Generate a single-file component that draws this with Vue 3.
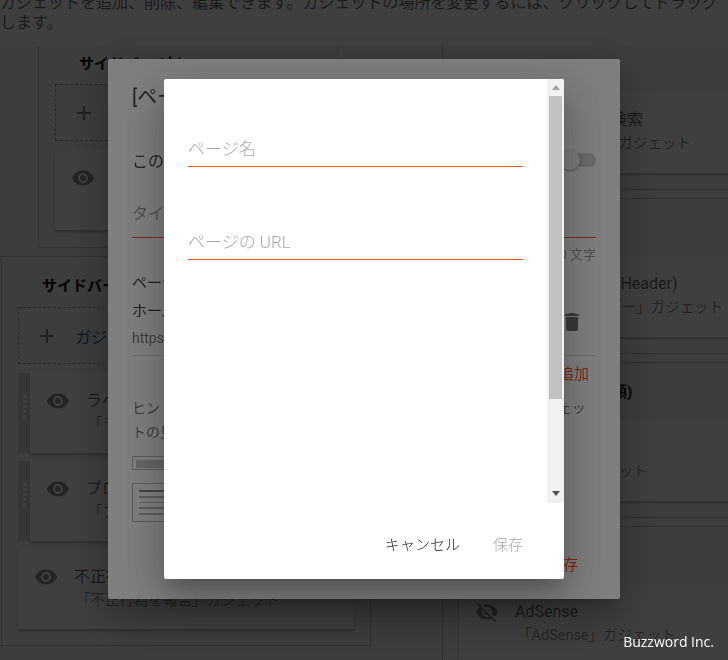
<template>
  <div class="page">
    <p class="notice">ガジェットを追加、削除、編集できます。ガジェットの場所を変更するには、クリックしてドラッグします。</p>

    <div class="columns">
      <div class="col col-left">
        <section v-for="sec in leftSections" :key="sec.title" class="area" :class="sec.cls">
          <h3 class="area-title">{{ sec.title }}</h3>
          <div class="add-box">
            <svg class="plus" viewBox="0 0 24 24"><path :d="plusPath" /></svg>
            <a class="add-link">ガジェットを追加</a>
          </div>
          <div v-for="g in sec.gadgets" :key="g.name" class="gadget-row">
            <div v-if="g.drag" class="handle"><i v-for="n in 5" :key="n"></i></div>
            <div class="gadget">
              <svg class="eye" viewBox="0 0 24 24"><path :d="g.off ? eyeOffPath : eyePath" /></svg>
              <div class="gadget-text">
                <div class="gadget-name">{{ g.name }}</div>
                <div class="gadget-type">{{ g.type }}</div>
              </div>
            </div>
          </div>
        </section>
      </div>

      <div class="col col-right">
        <section v-for="sec in rightSections" :key="sec.title" class="area" :class="sec.cls">
          <h3 class="area-title">{{ sec.title }}</h3>
          <div v-for="g in sec.gadgets" :key="g.name" class="gadget-row">
            <div class="gadget">
              <svg class="eye" viewBox="0 0 24 24"><path :d="g.off ? eyeOffPath : eyePath" /></svg>
              <div class="gadget-text">
                <div class="gadget-name">{{ g.name }}</div>
                <div class="gadget-type">{{ g.type }}</div>
              </div>
            </div>
          </div>
        </section>
      </div>
    </div>
  </div>

  <!-- gadget settings dialog -->
  <div class="scrim">
    <div class="dialog settings">
      <h2 class="settings-title">[ページ リスト] の設定</h2>
      <div class="toggle-row">
        <span>このガジェットを表示</span>
        <span class="toggle"><span class="knob"></span></span>
      </div>
      <div class="title-field">タイトル</div>
      <div class="counter">0 文字</div>
      <div class="page-row">
        <div>
          <div class="page-label">ページ</div>
          <div class="page-label">ホーム</div>
          <div class="page-url">https://www.buzzword.example/</div>
        </div>
        <svg class="trash" viewBox="0 0 24 24"><path :d="trashPath" /></svg>
      </div>
      <div class="add-page"><a>外部リンクを追加</a></div>
      <p class="hint">ヒント: ページを追加すると、ブログ上部にタブでページリストガジェッ<br>トの見出しが表示されます。</p>
      <div class="thumb-bar"><span></span></div>
      <div class="thumb-doc"><i v-for="n in 5" :key="n"></i></div>
      <div class="settings-foot"><a>保存</a></div>
    </div>
  </div>

  <!-- add page dialog -->
  <div class="scrim">
    <div class="dialog add-page-dialog">
      <div class="scroll-wrap">
        <div class="form">
          <div class="field"><input class="text-input" type="text" placeholder="ページ名" /></div>
          <div class="field second"><input class="text-input" type="text" placeholder="ページの URL" /></div>
        </div>
        <div class="scrollbar">
          <span class="arrow up"></span>
          <span class="thumb"></span>
          <span class="arrow down"></span>
        </div>
      </div>
      <div class="actions">
        <button class="btn">キャンセル</button>
        <button class="btn disabled">保存</button>
      </div>
    </div>
  </div>

  <div class="watermark">Buzzword Inc.</div>
</template>

<script setup>
const plusPath = 'M19 13h-6v6h-2v-6H5v-2h6V5h2v6h6v2z'
const eyePath = 'M12 4.5C7 4.5 2.73 7.61 1 12c1.73 4.39 6 7.5 11 7.5s9.27-3.11 11-7.5c-1.73-4.39-6-7.5-11-7.5zM12 17c-2.76 0-5-2.24-5-5s2.24-5 5-5 5 2.24 5 5-2.24 5-5 5zm0-8c-1.66 0-3 1.34-3 3s1.34 3 3 3 3-1.34 3-3-1.34-3-3-3z'
const eyeOffPath = 'M12 7c2.76 0 5 2.24 5 5 0 .65-.13 1.26-.36 1.83l2.92 2.92c1.51-1.26 2.7-2.89 3.43-4.75-1.73-4.39-6-7.5-11-7.5-1.4 0-2.74.25-3.98.7l2.16 2.16C10.74 7.13 11.35 7 12 7zM2 4.27l2.28 2.28.46.46C3.08 8.3 1.78 10.02 1 12c1.73 4.39 6 7.5 11 7.5 1.55 0 3.03-.3 4.38-.84l.42.42L19.73 22 21 20.73 3.27 3 2 4.27zM7.53 9.8l1.55 1.55c-.05.21-.08.43-.08.65 0 1.66 1.34 3 3 3 .22 0 .44-.03.65-.08l1.55 1.55c-.67.33-1.41.53-2.2.53-2.76 0-5-2.24-5-5 0-.79.2-1.53.53-2.2zm4.31-.78l3.15 3.15.02-.16c0-1.66-1.34-3-3-3l-.17.01z'
const trashPath = 'M6 19c0 1.1.9 2 2 2h8c1.1 0 2-.9 2-2V7H6v12zM19 4h-3.5l-1-1h-5l-1 1H5v2h14V4z'

const leftSections = [
  {
    title: 'サイドバー (上)',
    cls: 'inner-area',
    gadgets: [{ name: '検索', type: '「検索」ガジェット' }]
  },
  {
    title: 'サイドバー',
    cls: 'wide-area',
    gadgets: [
      { name: 'ラベル', type: '「ラベル」ガジェット', drag: true },
      { name: 'ブログ アーカイブ', type: '「ブログ アーカイブ」ガジェット', drag: true },
      { name: '不正行為を報告', type: '「不正行為を報告」ガジェット' }
    ]
  }
]

const rightSections = [
  {
    title: 'ページ上部',
    cls: 'cut-area',
    gadgets: [{ name: 'このブログを検索', type: '「ブログ検索」ガジェット' }]
  },
  {
    title: 'ページ ヘッダー',
    gadgets: [{ name: '上部ヘッダー (Header)', type: '「ページ ヘッダー」ガジェット' }]
  },
  {
    title: 'ブログの投稿欄 (先頭)',
    gadgets: [{ name: '広告', type: '「広告」ガジェット' }]
  },
  {
    title: 'ブログの投稿',
    gadgets: [{ name: 'AdSense', type: '「AdSense」ガジェット', off: true }]
  }
]
</script>

<style>
html,
body {
  margin: 0;
  height: 100%;
  overflow: hidden;
  background: #fff;
}
</style>

<style scoped>
.page {
  height: 660px;
  overflow: hidden;
  font-family: Roboto, "Noto Sans CJK JP", sans-serif;
  color: rgba(0, 0, 0, 0.6);
  background: #fff;
}

.notice {
  margin: -7px 0 0;
  height: 53px;
  width: 728px;
  font-size: 16px;
  line-height: 20px;
}

.columns {
  display: flex;
  height: 614px;
  background: #f4f4f4;
}

.col-left {
  flex: none;
  width: 442px;
  padding-left: 1px;
  box-sizing: border-box;
}

.col-right {
  flex: 1;
  min-width: 0;
  overflow: hidden;
  border-left: 1px solid #c8c8c8;
}

.area {
  border: 1px solid #c8c8c8;
  padding: 0 16px 16px;
  margin-bottom: 8px;
  box-sizing: border-box;
}

.inner-area {
  width: 300px;
  margin-left: 37px;
  height: 202px;
  border-top: none;
}

.inner-area .area-title {
  height: 38px;
  line-height: 36px;
}

.wide-area {
  width: 370px;
}

.col-right .area {
  width: 420px;
  border-left: none;
  height: 156px;
}

.col-right .area-title {
  height: 57px;
}

.col-right .cut-area {
  height: 144px;
  border-top: none;
}

.col-right .cut-area .area-title {
  height: 46px;
}

.area-title {
  margin: 0 0 0 24px;
  height: 50px;
  line-height: 58px;
  font-size: 15px;
  font-weight: 700;
  color: #000;
}

.add-box {
  display: flex;
  align-items: center;
  height: 57px;
  border: 1px dashed #a8a8a8;
  box-sizing: border-box;
  margin-bottom: 9px;
  padding-left: 16px;
  font-size: 16px;
}

.plus {
  width: 24px;
  height: 24px;
  fill: rgba(0, 0, 0, 0.45);
  margin-right: 16px;
}

.add-link {
  color: #2b6ca8;
}

.gadget-row {
  display: flex;
  margin-bottom: 8px;
}

.gadget-row:last-child {
  margin-bottom: 0;
}

.handle {
  width: 12px;
  height: 80px;
  background: #d8d8d8;
  display: flex;
  flex-direction: column;
  align-items: center;
  justify-content: center;
  gap: 2px;
  padding-bottom: 14px;
  box-sizing: border-box;
}

.handle i {
  width: 3px;
  height: 3px;
  background: #fff;
}

.gadget {
  flex: 1;
  display: flex;
  height: 80px;
  padding: 16px;
  box-sizing: border-box;
  background: #fff;
  box-shadow: 0 2px 2px rgba(0, 0, 0, 0.22);
}

.col-right .gadget {
  height: 81px;
}

.eye {
  width: 24px;
  height: 24px;
  fill: rgba(0, 0, 0, 0.45);
  margin-right: 16px;
  flex: none;
}

.gadget-text {
  margin-top: -1px;
  white-space: nowrap;
}

.gadget-name {
  font-size: 16px;
  line-height: 25px;
}

.gadget-type {
  font-size: 14.5px;
  line-height: 24px;
  margin-left: 2px;
  color: rgba(0, 0, 0, 0.45);
}

.scrim {
  position: fixed;
  inset: 0;
  display: flex;
  justify-content: center;
  align-items: flex-start;
  background: rgba(0, 0, 0, 0.5);
  font-family: Roboto, "Noto Sans CJK JP", sans-serif;
  color: rgba(0, 0, 0, 0.75);
}

.dialog {
  background: #fff;
  box-sizing: border-box;
  overflow: hidden;
  box-shadow: 0 11px 15px -7px rgba(0, 0, 0, 0.2), 0 24px 38px 3px rgba(0, 0, 0, 0.14), 0 9px 46px 8px rgba(0, 0, 0, 0.12);
}

/* settings dialog */
.settings {
  width: 512px;
  height: 540px;
  margin-top: 59px;
  padding: 0 24px;
  border-radius: 2px;
}

.settings-title {
  margin: 24px 0 0;
  font-size: 20px;
  line-height: 28px;
  font-weight: 400;
}

.toggle-row {
  display: flex;
  justify-content: space-between;
  align-items: center;
  height: 24px;
  margin-top: 37px;
  font-size: 16px;
}

.toggle {
  position: relative;
  width: 34px;
  height: 14px;
  border-radius: 7px;
  background: #d4d4d4;
}

.knob {
  position: absolute;
  left: -2px;
  top: -3px;
  width: 20px;
  height: 20px;
  border-radius: 50%;
  background: #fafafa;
  box-shadow: 0 1px 3px rgba(0, 0, 0, 0.4);
}

.title-field {
  margin-top: 29px;
  height: 36px;
  line-height: 26px;
  font-size: 16px;
  color: rgba(0, 0, 0, 0.38);
  border-bottom: 1px solid #ff5722;
}

.counter {
  text-align: right;
  margin-top: 8px;
  font-size: 13px;
  line-height: 18px;
  color: rgba(0, 0, 0, 0.38);
}

.page-row {
  display: flex;
  justify-content: space-between;
  margin-top: 5px;
  padding-bottom: 3px;
  border-bottom: 1px solid rgba(0, 0, 0, 0.12);
}

.page-label {
  font-size: 15px;
  line-height: 28px;
}

.page-url {
  font-size: 14px;
  line-height: 28px;
  margin-top: -1px;
  color: rgba(0, 0, 0, 0.54);
}

.trash {
  width: 24px;
  height: 24px;
  align-self: flex-end;
  margin: 0 12px 18px 0;
  fill: rgba(0, 0, 0, 0.54);
}

.add-page {
  text-align: right;
  margin-top: 6px;
  padding-right: 7px;
  font-size: 15px;
  line-height: 24px;
  color: #ff5722;
}

.hint {
  margin: 10px 0 0;
  font-size: 14px;
  line-height: 24px;
  color: rgba(0, 0, 0, 0.54);
  white-space: nowrap;
}

.thumb-bar {
  margin-top: 12px;
  width: 120px;
  height: 14px;
  padding: 3px;
  box-sizing: border-box;
  border: 1px solid #bbb;
}

.thumb-bar span {
  display: block;
  width: 80px;
  height: 8px;
  background: #ccc;
}

.thumb-doc {
  margin-top: 13px;
  width: 120px;
  height: 39px;
  border: 1px solid #bbb;
  box-sizing: border-box;
  padding: 6px;
  display: flex;
  flex-direction: column;
  gap: 4px;
}

.thumb-doc i {
  height: 2px;
  background: #bbb;
}

.thumb-doc i:first-child {
  background: #888;
}

.settings-foot {
  text-align: right;
  margin-top: 31px;
  padding-right: 18px;
  font-size: 15px;
  line-height: 24px;
  color: #ff5722;
}

/* add page dialog */
.add-page-dialog {
  width: 400px;
  height: 500px;
  margin-top: 79px;
  border-radius: 2px;
  display: flex;
  flex-direction: column;
}

.scroll-wrap {
  display: flex;
  height: 424px;
}

.form {
  flex: 1;
  padding: 55px 24px 0;
  display: flex;
  flex-direction: column;
}

.field {
  height: 33px;
  box-sizing: border-box;
  border-bottom: 1px solid #ff5722;
}

.field.second {
  margin-top: 60px;
}

.text-input {
  display: block;
  width: 100%;
  height: 32px;
  box-sizing: border-box;
  padding: 0 0 3px;
  border: none;
  outline: none;
  background: transparent;
  font-family: Roboto, "Noto Sans CJK JP", sans-serif;
  font-size: 17px;
  font-weight: 300;
}

.text-input::placeholder {
  color: rgba(0, 0, 0, 0.36);
  opacity: 1;
}

.scrollbar {
  position: relative;
  width: 17px;
  background: #f1f1f1;
}

.thumb {
  display: block;
  width: 13px;
  height: 303px;
  margin: 17px 2px 0;
  background: #c1c1c1;
}

.arrow {
  position: absolute;
  left: 5px;
  width: 0;
  height: 0;
  border-left: 4px solid transparent;
  border-right: 4px solid transparent;
}

.arrow.up {
  top: 6px;
  border-bottom: 5px solid #a3a3a3;
}

.arrow.down {
  bottom: 7px;
  border-top: 5px solid #505050;
}

.actions {
  display: flex;
  justify-content: flex-end;
  gap: 33px;
  padding: 31px 41px 0 0;
}

.btn {
  padding: 0;
  border: none;
  background: none;
  font-family: Roboto, "Noto Sans CJK JP", sans-serif;
  font-size: 15px;
  font-weight: 300;
  line-height: 22px;
  color: rgba(0, 0, 0, 0.87);
}

.btn.disabled {
  color: rgba(0, 0, 0, 0.36);
}

.watermark {
  position: fixed;
  right: 14px;
  bottom: 8px;
  font-family: "Open Sans", sans-serif;
  font-size: 14px;
  font-weight: 500;
  line-height: 20px;
  color: #fff;
}
</style>
